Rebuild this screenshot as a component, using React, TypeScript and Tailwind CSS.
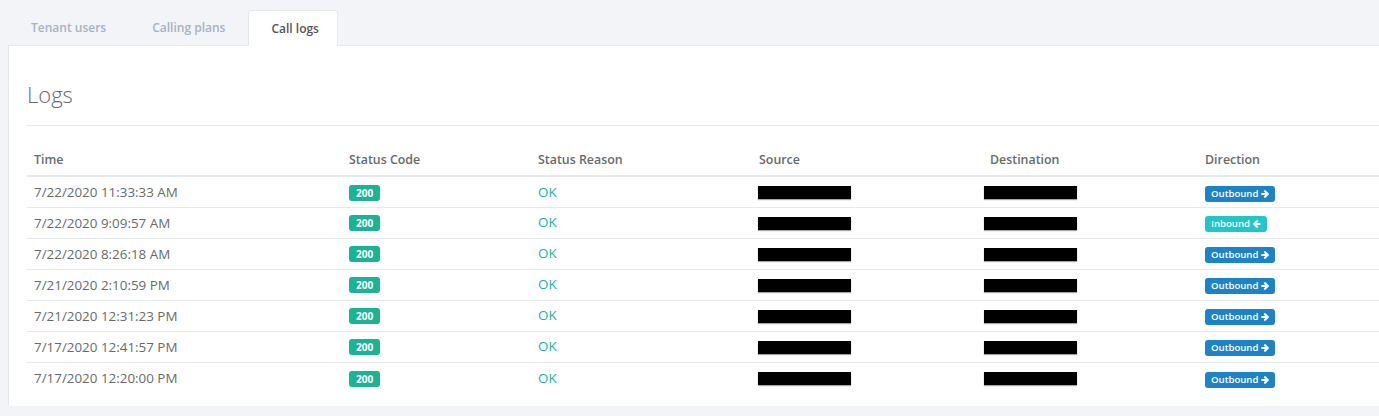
import React from "react";

type Log = { time: string; direction: "Outbound" | "Inbound" };

const logs: Log[] = [
  { time: "7/22/2020 11:33:33 AM", direction: "Outbound" },
  { time: "7/22/2020 9:09:57 AM", direction: "Inbound" },
  { time: "7/22/2020 8:26:18 AM", direction: "Outbound" },
  { time: "7/21/2020 2:10:59 PM", direction: "Outbound" },
  { time: "7/21/2020 12:31:23 PM", direction: "Outbound" },
  { time: "7/17/2020 12:41:57 PM", direction: "Outbound" },
  { time: "7/17/2020 12:20:00 PM", direction: "Outbound" },
];

function Arrow({ left }: { left?: boolean }) {
  return (
    <svg
      viewBox="0 0 10 10"
      className={"h-[8px] w-[8px] " + (left ? "rotate-180" : "")}
      fill="none"
      stroke="currentColor"
      strokeWidth={2.8}
      strokeLinecap="round"
      strokeLinejoin="round"
    >
      <path d="M1.5 5h7M5 1.5 8.5 5 5 8.5" />
    </svg>
  );
}

function Redacted() {
  return <div className="h-[13px] w-[93px] bg-black shadow-[0_1px_1px_rgba(0,0,0,0.35)]" />;
}

export default function App() {
  const tabs = ["Tenant users", "Calling plans", "Call logs"];

  return (
    <div
      className="h-[416px] w-full overflow-hidden bg-[#f3f4f8] pl-[8px] pt-[10px] text-[13.4px] text-[#676a6c]"
      style={{ fontFamily: '"Open Sans", "Liberation Sans", sans-serif' }}
    >
      <div className="flex h-[35px] items-stretch text-[12px]">
        {tabs.map((t) => {
          const active = t === "Call logs";
          return (
            <div
              key={t}
              className={
                active
                  ? "relative z-10 -mb-px flex items-center rounded-t-[4px] border border-b-0 border-[#e7eaec] bg-white pl-[22px] pr-[18px] font-semibold text-[#555555]"
                  : "flex items-center px-[23px] font-semibold text-[#a7b1c2]"
              }
            >
              {t}
            </div>
          );
        })}
      </div>

      <div className="h-[361px] border-l border-t border-[#e7eaec] bg-white pl-[18px] pt-[33px]">
        <h2 className="text-[22px] font-light leading-[30px] text-[#676a6c]">Logs</h2>
        <div className="mt-[16px] h-px bg-[#e7eaec]" />

        <table className="mt-[19px] w-full table-fixed border-collapse text-left">
          <colgroup>
            <col className="w-[315px]" />
            <col className="w-[189px]" />
            <col className="w-[221px]" />
            <col className="w-[231px]" />
            <col className="w-[215px]" />
            <col />
          </colgroup>
          <thead>
            <tr className="border-b-2 border-[#e7eaec]">
              {["Time", "Status Code", "Status Reason", "Source", "Destination", "Direction"].map((h) => (
                <th key={h} className="px-[7px] py-[6px] text-[12.4px] font-semibold leading-[18px]">
                  {h}
                </th>
              ))}
            </tr>
          </thead>
          <tbody>
            {logs.map((l, i) => (
              <tr key={i} className={i < logs.length - 1 ? "border-b border-[#e7eaec]" : ""}>
                <td className="h-[31px] px-[7px] leading-[18px]">{l.time}</td>
                <td className="px-[7px]">
                  <span className="mt-[3px] inline-block rounded-[3px] bg-[#1ab394] px-[7px] text-[10px] font-bold leading-[16px] text-white">
                    200
                  </span>
                </td>
                <td className="px-[7px] text-[#1ab394]">OK</td>
                <td className="px-[7px]">
                  <div className="-ml-[1px] mt-[1px]">
                    <Redacted />
                  </div>
                </td>
                <td className="px-[7px]">
                  <div className="-ml-[6px] mt-[1px]">
                    <Redacted />
                  </div>
                </td>
                <td className="px-[7px]">
                  <span
                    className={
                      "mt-[3px] inline-flex items-center gap-[3px] rounded-[3px] px-[6px] text-[9.6px] font-semibold leading-[16px] text-white " +
                      (l.direction === "Outbound" ? "bg-[#1c84c6]" : "bg-[#23c6c8]")
                    }
                  >
                    {l.direction}
                    <Arrow left={l.direction === "Inbound"} />
                  </span>
                </td>
              </tr>
            ))}
          </tbody>
        </table>
      </div>
    </div>
  );
}
